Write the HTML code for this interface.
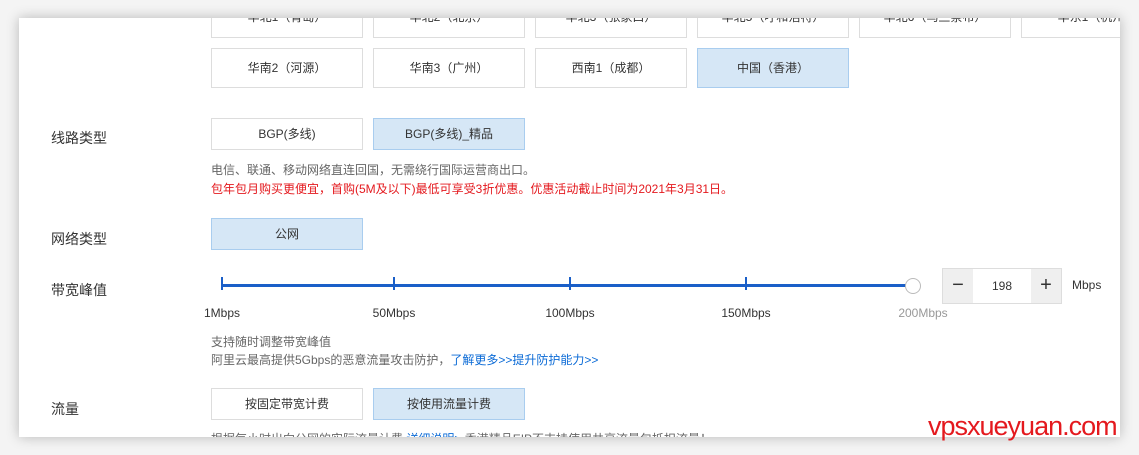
<!DOCTYPE html><html><head><meta charset="utf-8"><style>
body{margin:0;width:1139px;height:455px;background:#f4f4f4;position:relative;overflow:hidden;font-family:"Liberation Sans","Noto Sans CJK SC",sans-serif;}
.card{position:absolute;left:19px;top:18px;width:1101px;height:419px;background:#fff;box-shadow:0 0 12px rgba(0,0,0,.25);overflow:hidden}
.b{position:absolute;width:152px;border:1px solid #ddd;background:#fff;color:#333;font-size:12px;text-align:center;box-sizing:border-box}
.s{background:#d6e7f6;border-color:#a9cdef}
.lbl{position:absolute;left:32px;font-size:14px;color:#333}
.t{position:absolute;font-size:12px;white-space:nowrap}
.tick{position:absolute;top:259px;width:2px;height:13px;background:#1a5fc8}
.ml{position:absolute;top:288px;font-size:12px;color:#333;transform:translateX(-50%)}
</style></head><body>
<div class="card">
<div class="b" style="left:192px;top:-20px;height:40px;line-height:36px">华北1（青岛）</div>
<div class="b" style="left:354px;top:-20px;height:40px;line-height:36px">华北2（北京）</div>
<div class="b" style="left:516px;top:-20px;height:40px;line-height:36px">华北3（张家口）</div>
<div class="b" style="left:678px;top:-20px;height:40px;line-height:36px">华北5（呼和浩特）</div>
<div class="b" style="left:840px;top:-20px;height:40px;line-height:36px">华北6（乌兰察布）</div>
<div class="b" style="left:1002px;top:-20px;height:40px;line-height:36px">华东1（杭州）</div>
<div class="b" style="left:192px;top:30px;height:40px;line-height:38px">华南2（河源）</div>
<div class="b" style="left:354px;top:30px;height:40px;line-height:38px">华南3（广州）</div>
<div class="b" style="left:516px;top:30px;height:40px;line-height:38px">西南1（成都）</div>
<div class="b s" style="left:678px;top:30px;height:40px;line-height:38px">中国（香港）</div>
<div class="lbl" style="top:110px">线路类型</div>
<div class="b" style="left:192px;top:100px;height:32px;line-height:30px">BGP(多线)</div>
<div class="b s" style="left:354px;top:100px;height:32px;line-height:30px">BGP(多线)_精品</div>
<div class="t" style="left:192px;top:143px;color:#666">电信、联通、移动网络直连回国，无需绕行国际运营商出口。</div>
<div class="t" style="left:192px;top:162px;color:#e4191e">包年包月购买更便宜，首购(5M及以下)最低可享受3折优惠。优惠活动截止时间为2021年3月31日。</div>
<div class="lbl" style="top:211px">网络类型</div>
<div class="b s" style="left:192px;top:200px;height:32px;line-height:30px">公网</div>
<div class="lbl" style="top:262px">带宽峰值</div>
<div style="position:absolute;left:203px;top:266px;width:691px;height:3px;background:#1a5fc8"></div>
<div class="tick" style="left:202px"></div><div class="tick" style="left:374px"></div><div class="tick" style="left:550px"></div><div class="tick" style="left:726px"></div>
<div style="position:absolute;left:886px;top:260px;width:14px;height:14px;border-radius:50%;background:#fff;border:1px solid #bbb"></div>
<div class="ml" style="left:203px">1Mbps</div><div class="ml" style="left:375px">50Mbps</div><div class="ml" style="left:551px">100Mbps</div><div class="ml" style="left:727px">150Mbps</div><div class="ml" style="left:904px;color:#999">200Mbps</div>
<div style="position:absolute;left:923px;top:250px;width:120px;height:36px;border:1px solid #ddd;box-sizing:border-box;background:#fff">
<div style="position:absolute;left:0;top:0;width:30px;height:34px;background:#efefef;font-size:20px;text-align:center;line-height:32px;color:#333">−</div>
<div style="position:absolute;left:30px;top:0;width:58px;height:34px;font-size:12px;text-align:center;line-height:34px;color:#333">198</div>
<div style="position:absolute;right:0;top:0;width:30px;height:34px;background:#efefef;font-size:20px;text-align:center;line-height:32px;color:#333">+</div></div>
<div class="t" style="left:1053px;top:260px;color:#333">Mbps</div>
<div class="t" style="left:192px;top:315px;color:#666">支持随时调整带宽峰值</div>
<div class="t" style="left:192px;top:333px;color:#666">阿里云最高提供5Gbps的恶意流量攻击防护，<span style="color:#0a6ad6">了解更多>>提升防护能力>></span></div>
<div class="lbl" style="top:381px">流量</div>
<div class="b" style="left:192px;top:370px;height:32px;line-height:30px">按固定带宽计费</div>
<div class="b s" style="left:354px;top:370px;height:32px;line-height:30px">按使用流量计费</div>
<div class="t" style="left:192px;top:412px;color:#666">根据每小时出向公网的实际流量计费 <span style="color:#0a6ad6">详细说明></span> 香港精品EIP不支持使用共享流量包抵扣流量！</div>
</div>
<div style="position:absolute;left:928px;top:411px;font-size:27px;color:#e4191e;font-family:'Liberation Sans',sans-serif;letter-spacing:-1px">vpsxueyuan.com</div>
</body></html>
